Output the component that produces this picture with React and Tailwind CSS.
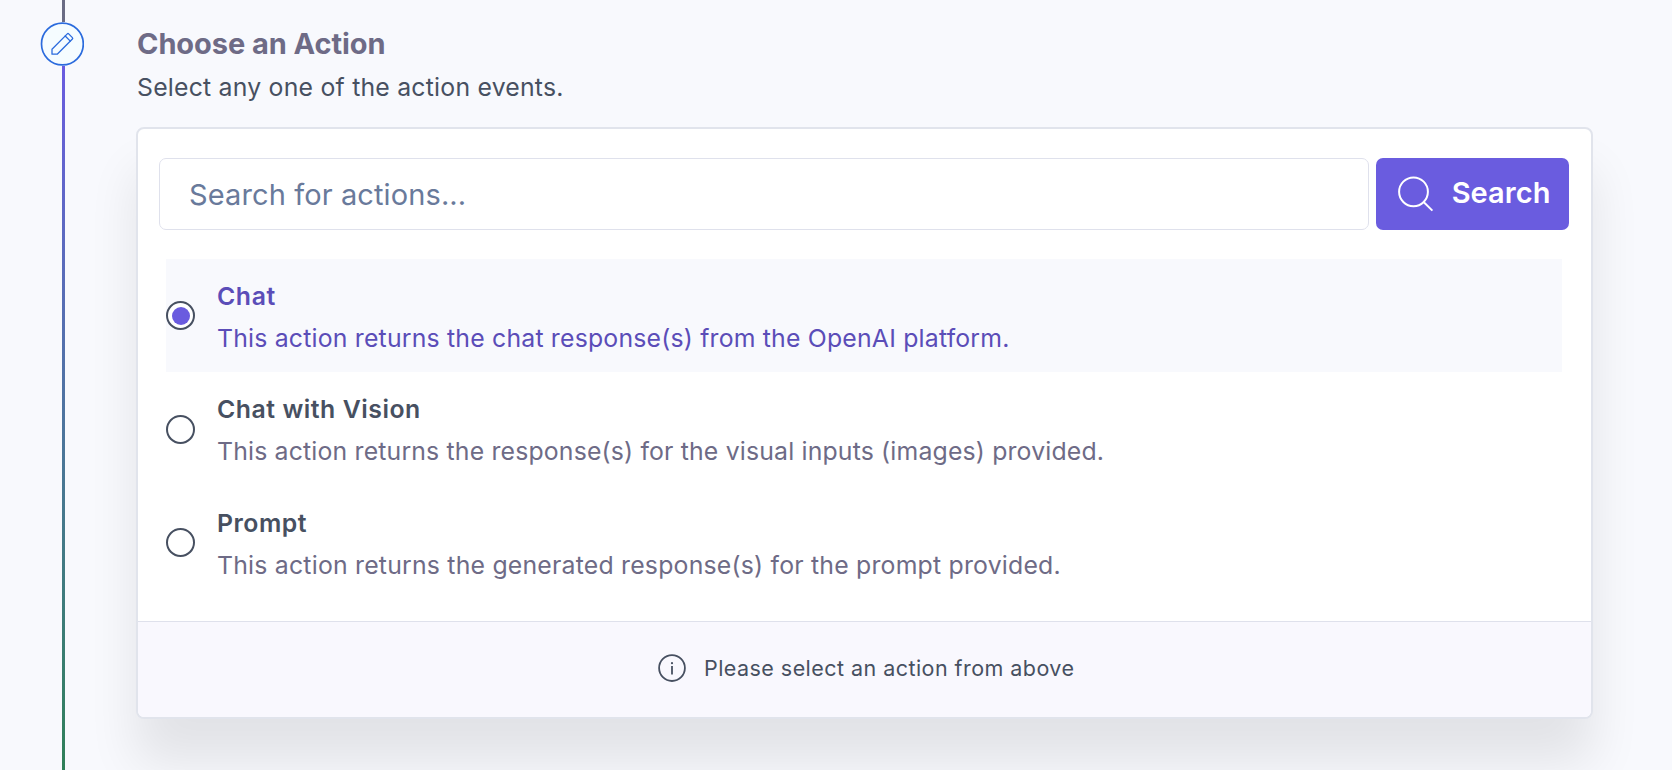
const actions = [
  {
    title: "Chat",
    description: "This action returns the chat response(s) from the OpenAI platform.",
    selected: true,
    titleClass: "tracking-[0.6px]",
    descClass: "tracking-[0.2px]",
  },
  {
    title: "Chat with Vision",
    description: "This action returns the response(s) for the visual inputs (images) provided.",
    titleClass: "tracking-[0.54px]",
    descClass: "tracking-[0.175px]",
  },
  {
    title: "Prompt",
    description: "This action returns the generated response(s) for the prompt provided.",
    titleClass: "tracking-[0.5px]",
    descClass: "tracking-[0.215px]",
  },
];

function StepRail() {
  return (
    <div className="flex h-[770px] w-[136px] shrink-0 flex-col">
      <div className="ml-[62px] h-[22px] w-[3px] bg-[#6a6c84]" />
      <svg className="ml-[40px] shrink-0" width="44" height="44" viewBox="0 0 44 44" fill="none" stroke="#2b6bdd">
        <circle cx="22.4" cy="22" r="20.9" fill="#f5fcff" strokeWidth="1.7" />
        <g strokeWidth="1.3" strokeLinejoin="round" strokeLinecap="round">
          <path d="M12 32.2V27.2L27.3 11.9Q28 11.2 28.7 11.9L32.4 15.6Q33.1 16.3 32.4 17L17.2 32.2Z" />
          <path d="M25.2 14L30.3 19.1" />
        </g>
      </svg>
      <div className="ml-[62px] w-[3px] flex-1 bg-linear-to-b from-[#6a5be0] to-[#2f8058]" />
    </div>
  );
}

function Radio({ checked }) {
  return (
    <span className="flex size-[29px] shrink-0 items-center justify-center rounded-full border-2 border-[#475061] bg-white">
      {checked && <span className="size-[18px] rounded-full bg-[#6a5bdf]" />}
    </span>
  );
}

function ActionRow({ action }) {
  return (
    <li className={action.selected ? "flex h-[113px] items-center bg-[#f8f9fd]" : "flex h-[113px] items-center"}>
      <Radio checked={action.selected} />
      <div className={action.selected ? "ml-[22px] pt-[2px] text-[#5b4db8]" : "ml-[22px] pt-[2px] text-[#6e6b86]"}>
        <div
          className={
            (action.selected
              ? "text-[24.8px] leading-[42px] font-semibold "
              : "text-[24.8px] leading-[42px] font-semibold text-[#475061] ") + action.titleClass
          }
        >
          {action.title}
        </div>
        <div className={"text-[24.8px] leading-[42px] whitespace-nowrap " + action.descClass}>{action.description}</div>
      </div>
    </li>
  );
}

export default function App() {
  return (
    <div className="flex h-[770px] w-full overflow-hidden bg-[#f8f9fd] font-[Inter,sans-serif] font-[370]">
      <StepRail />
      <main className="w-[1457px] shrink-0 pt-[24px]">
        <h1 className="pl-px text-[29px] leading-[40px] font-bold tracking-[-0.07px] text-[#6e6b86]">Choose an Action</h1>
        <p className="mt-[5px] pl-px text-[24.8px] leading-[36px] tracking-[0.22px] text-[#475061]">
          Select any one of the action events.
        </p>

        <section className="mt-[22px] flex h-[592px] flex-col overflow-clip rounded-[8px] border-2 border-[#e1e4ec] bg-white shadow-[0_44px_50px_0_rgba(0,10,0,0.09)]">
          <div className="flex h-[101px] gap-[7px] pt-[29px] pr-[22px] pl-[21px]">
            <div className="flex flex-1 items-center rounded-[7px] border border-[#dfe1ec] pt-px pl-[29px] text-[29px] tracking-[0.11px] text-[#697a9b]">
              Search for actions...
            </div>
            <button className="flex w-[193px] items-center rounded-[7px] bg-[#6a5cdf] pl-[21px] text-white">
              <svg width="38" height="38" viewBox="0 0 38 38" fill="none" stroke="white" strokeWidth="2">
                <circle cx="16.5" cy="16.8" r="14.4" />
                <path d="M26.6 27L35.4 35.6" />
              </svg>
              <span className="mb-[3px] ml-[16.7px] text-[29px] leading-[36px] font-semibold tracking-[0.05px]">Search</span>
            </button>
          </div>

          <ul className="mt-[29px] mr-[29px] ml-[28px] flex flex-1 flex-col gap-[0.5px]">
            {actions.map((a) => (
              <ActionRow key={a.title} action={a} />
            ))}
          </ul>

          <footer className="flex h-[96px] shrink-0 items-center border-t border-[#dfe1ec] bg-[#f9f8fe] pb-[2px] pl-[520px] text-[#475061]">
            <svg className="mb-[1px]" width="28" height="28" viewBox="0 0 28 28" fill="none" stroke="#475061">
              <circle cx="14" cy="14.1" r="12.9" strokeWidth="1.8" />
              <path d="M14 12.1V20.5" strokeWidth="1.8" />
              <circle cx="14" cy="9.2" r="1.1" fill="#475061" stroke="none" />
            </svg>
            <span className="ml-[18px] text-[21.5px] tracking-[0.45px]">Please select an action from above</span>
          </footer>
        </section>
      </main>
    </div>
  );
}
